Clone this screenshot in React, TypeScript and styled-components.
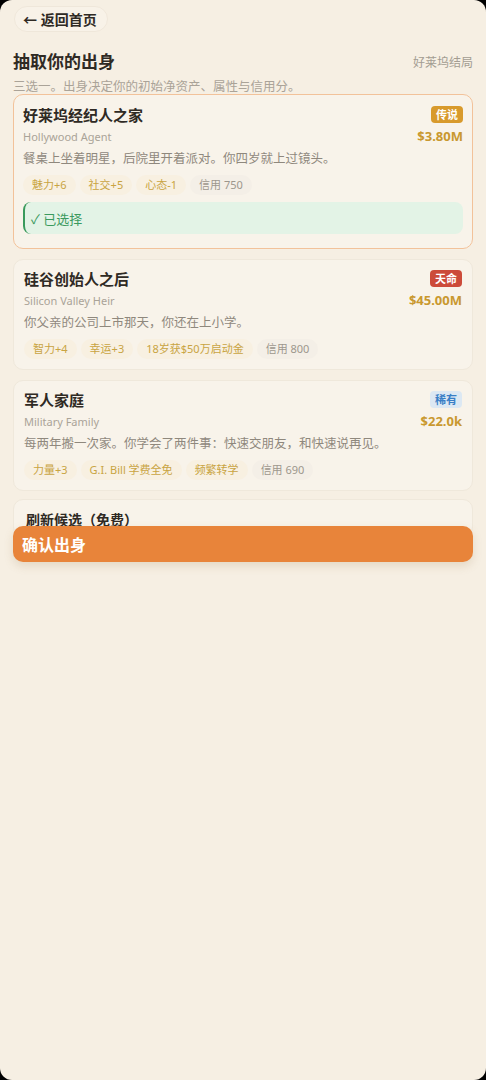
import styled, { createGlobalStyle } from "styled-components";

const GlobalStyle = createGlobalStyle`
  html, body {
    margin: 0;
    padding: 0;
    background: #000;
  }
  * {
    box-sizing: border-box;
  }
`;

const FONT = `"Noto Sans", "Noto Sans CJK SC", sans-serif`;

const Screen = styled.div`
  height: 1080px;
  background: #f6efe3;
  border-radius: 12px;
  padding: 6px 13px 0;
  font-family: ${FONT};
  color: #2f2a24;
  overflow: hidden;
`;

const BackButton = styled.button`
  display: inline-flex;
  align-items: center;
  gap: 3px;
  height: 26px;
  padding: 0 10px 0 8px;
  margin-left: 1px;
  border: 1px solid #efe7da;
  border-radius: 13px;
  background: #f8f2e8;
  font-family: ${FONT};
  font-size: 14px;
  font-weight: 700;
  color: #2f2a24;
`;

const HeaderRow = styled.div`
  display: flex;
  justify-content: space-between;
  align-items: center;
  margin-top: 18px;
`;

const Title = styled.h1`
  margin: 0;
  font-size: 17px;
  line-height: 24px;
  font-weight: 700;
`;

const Ending = styled.span`
  font-size: 12px;
  color: #a39d92;
`;

const Intro = styled.p`
  margin: 4px 0 0;
  font-size: 12.5px;
  line-height: 18px;
  color: #aaa398;
`;

const CardList = styled.div`
  display: flex;
  flex-direction: column;
  gap: 10px;
  margin-top: -2px;
`;

const Card = styled.div<{ $selected?: boolean }>`
  position: relative;
  display: flex;
  flex-direction: column;
  padding: ${({ $selected }) => ($selected ? "10px 9px 14px" : "9px 10px 10px")};
  background: #f8f3ea;
  border: ${({ $selected }) => ($selected ? "1.5px solid #f2c29a" : "1px solid #efe8db")};
  border-radius: 10px;
`;

const CardTop = styled.div`
  display: flex;
  justify-content: space-between;
  align-items: flex-start;
`;

const Info = styled.div`
  display: flex;
  flex-direction: column;
`;

const Name = styled.div`
  font-size: 15px;
  line-height: 20px;
  font-weight: 700;
  color: #2f2a24;
`;

const EnName = styled.div`
  margin-top: 4px;
  font-size: 11px;
  line-height: 16px;
  color: #aaa398;
`;

const Desc = styled.div`
  margin-top: 5px;
  font-size: 12.5px;
  line-height: 18px;
  color: #8f887d;
`;

const Side = styled.div`
  display: flex;
  flex-direction: column;
  align-items: flex-end;
  gap: 4px;
  padding-top: 1px;
`;

const badgeColors = {
  legend: { bg: "#d89a2c", fg: "#ffffff" },
  fate: { bg: "#cc4b3a", fg: "#ffffff" },
  rare: { bg: "#dce8f3", fg: "#3a7fc6" },
};

type Rarity = keyof typeof badgeColors;

const Badge = styled.span<{ $rarity: Rarity }>`
  display: inline-block;
  padding: 0 5px;
  height: 17px;
  line-height: 17px;
  border-radius: 4px;
  font-size: 11px;
  font-weight: 700;
  background: ${({ $rarity }) => badgeColors[$rarity].bg};
  color: ${({ $rarity }) => badgeColors[$rarity].fg};
`;

const Price = styled.span`
  font-size: 13px;
  line-height: 18px;
  font-weight: 700;
  color: #c9982f;
`;

const Tags = styled.div`
  display: flex;
  flex-wrap: wrap;
  gap: 4px;
  margin-top: 7px;
`;

const Tag = styled.span<{ $muted?: boolean }>`
  display: inline-block;
  height: 20px;
  line-height: 20px;
  padding: 0 9px;
  border-radius: 10px;
  font-size: 11px;
  background: ${({ $muted }) => ($muted ? "#f4efe7" : "#f8f0e1")};
  color: ${({ $muted }) => ($muted ? "#9d978d" : "#c9a442")};
`;

const Chosen = styled.div`
  display: flex;
  align-items: center;
  height: 32px;
  margin-top: 7px;
  padding-left: 6px;
  background: #e3f3e6;
  border-left: 2.5px solid #3a9a5c;
  border-radius: 8px;
  font-size: 13px;
  color: #3b9a5e;
`;

const RefreshButton = styled.button`
  display: block;
  width: 100%;
  height: 38px;
  margin-top: 8px;
  padding: 3px 12px 0;
  text-align: left;
  vertical-align: top;
  border: 1px solid #efe8db;
  border-radius: 10px;
  background: #f8f3ea;
  font-family: ${FONT};
  font-size: 14px;
  line-height: 20px;
  font-weight: 700;
  color: #2f2a24;
`;

const ConfirmButton = styled.button`
  position: relative;
  display: block;
  width: 100%;
  height: 36px;
  margin-top: -11px;
  padding: 0 9px;
  text-align: left;
  border: none;
  border-radius: 10px;
  background: #e8843a;
  box-shadow: 0 4px 10px rgba(150, 110, 60, 0.18);
  font-family: ${FONT};
  font-size: 16px;
  font-weight: 700;
  color: #ffffff;
`;

type Origin = {
  name: string;
  en: string;
  desc: string;
  rarity: Rarity;
  rarityLabel: string;
  price: string;
  tags: string[];
  credit: string;
  selected?: boolean;
};

const origins: Origin[] = [
  {
    name: "好莱坞经纪人之家",
    en: "Hollywood Agent",
    desc: "餐桌上坐着明星，后院里开着派对。你四岁就上过镜头。",
    rarity: "legend",
    rarityLabel: "传说",
    price: "$3.80M",
    tags: ["魅力+6", "社交+5", "心态-1"],
    credit: "信用 750",
    selected: true,
  },
  {
    name: "硅谷创始人之后",
    en: "Silicon Valley Heir",
    desc: "你父亲的公司上市那天，你还在上小学。",
    rarity: "fate",
    rarityLabel: "天命",
    price: "$45.00M",
    tags: ["智力+4", "幸运+3", "18岁获$50万启动金"],
    credit: "信用 800",
  },
  {
    name: "军人家庭",
    en: "Military Family",
    desc: "每两年搬一次家。你学会了两件事：快速交朋友，和快速说再见。",
    rarity: "rare",
    rarityLabel: "稀有",
    price: "$22.0k",
    tags: ["力量+3", "G.I. Bill 学费全免", "频繁转学"],
    credit: "信用 690",
  },
];

export default function App() {
  return (
    <>
      <GlobalStyle />
      <Screen>
        <BackButton>← 返回首页</BackButton>
        <HeaderRow>
          <Title>抽取你的出身</Title>
          <Ending>好莱坞结局</Ending>
        </HeaderRow>
        <Intro>三选一。出身决定你的初始净资产、属性与信用分。</Intro>
        <CardList>
          {origins.map((o) => (
            <Card key={o.en} $selected={o.selected}>
              <CardTop>
                <Info>
                  <Name>{o.name}</Name>
                  <EnName>{o.en}</EnName>
                  <Desc>{o.desc}</Desc>
                </Info>
                <Side>
                  <Badge $rarity={o.rarity}>{o.rarityLabel}</Badge>
                  <Price>{o.price}</Price>
                </Side>
              </CardTop>
              <Tags>
                {o.tags.map((t) => (
                  <Tag key={t}>{t}</Tag>
                ))}
                <Tag $muted>{o.credit}</Tag>
              </Tags>
              {o.selected && <Chosen>✓ 已选择</Chosen>}
            </Card>
          ))}
        </CardList>
        <RefreshButton>刷新候选（免费）</RefreshButton>
        <ConfirmButton>确认出身</ConfirmButton>
      </Screen>
    </>
  );
}
